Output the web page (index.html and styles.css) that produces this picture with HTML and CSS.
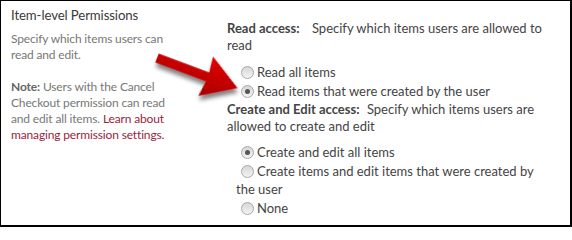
FILE: index.html
```html
<!DOCTYPE html>
<html>
<head>
<meta charset="utf-8">
<link rel="stylesheet" href="styles.css">
</head>
<body>
<div class="frame">
  <section class="left">
    <h3 class="title">Item-level Permissions</h3>
    <p class="desc">Specify which items users can read and edit.</p>
    <p class="desc"><b>Note:</b> Users with the Cancel Checkout permission can read and edit all items. <a class="link" href="#">Learn about managing permission settings.</a></p>
  </section>
  <section class="right">
    <p class="q"><b class="qlabel qlabel-read">Read access:</b> Specify which items users are allowed to read</p>
    <div class="opts opts-read">
      <div class="opt"><input class="radio" type="radio" name="read"><label class="lbl">Read all items</label></div>
      <div class="opt"><input class="radio" type="radio" name="read" checked><label class="lbl">Read items that were created by the user</label></div>
    </div>
    <p class="q q2"><b class="qlabel qlabel-edit">Create and Edit access:</b> Specify which items users are allowed to create and edit</p>
    <div class="opts opts-edit">
      <div class="opt"><input class="radio" type="radio" name="edit" checked><label class="lbl">Create and edit all items</label></div>
      <div class="opt"><input class="radio" type="radio" name="edit"><label class="lbl">Create items and edit items that were created by the user</label></div>
      <div class="opt"><input class="radio" type="radio" name="edit"><label class="lbl">None</label></div>
    </div>
  </section>
  <svg class="arrow" width="572" height="227" viewBox="0 0 572 227">
    <defs>
      <linearGradient id="red" x1="0" y1="0" x2="0" y2="1">
        <stop offset="0" stop-color="#e00000"/>
        <stop offset="1" stop-color="#a80000"/>
      </linearGradient>
      <filter id="sh" x="-20%" y="-20%" width="150%" height="160%">
        <feGaussianBlur in="SourceAlpha" stdDeviation="2.2"/>
        <feOffset dx="2" dy="4" result="b"/>
        <feComponentTransfer><feFuncA type="linear" slope="0.5"/></feComponentTransfer>
        <feMerge><feMergeNode/><feMergeNode in="SourceGraphic"/></feMerge>
      </filter>
    </defs>
    <g transform="translate(157 58) rotate(20.5)" filter="url(#sh)">
      <polygon points="0,-4.8 54,-4.8 52,-21 86,0 52,21 54,4.8 0,4.8" fill="url(#red)"/>
    </g>
  </svg>
</div>
</body>
</html>
```

FILE: styles.css
```css
* { box-sizing: border-box; }
html, body { margin: 0; padding: 0; background: #fff; }
.frame {
  position: relative;
  width: 572px;
  height: 227px;
  border-style: solid;
  border-color: #000;
  border-width: 1px 2px 2px 1px;
  display: grid;
  grid-template-columns: 226px 1fr;
  font-family: "Lato", "Open Sans", sans-serif;
  font-size: 13px;
  line-height: 16px;
  color: #444;
  overflow: hidden;
}
.left { padding: 4px 48px 0 10px; }
.title {
  margin: 0 0 6px;
  font-size: 13.2px;
  letter-spacing: -0.1px;
  font-weight: normal;
  line-height: 20px;
  color: #3a3a3a;
}
.desc {
  margin: 0 0 16px;
  font-size: 12px;
  letter-spacing: -0.15px;
  color: #777;
}
.desc b { color: #666; }
.link { color: #9b1d3c; text-decoration: none; }
.right { padding: 19px 18px 0 0; }
.q { margin: 0; line-height: 17px; }
.q2 { margin-top: 1px; }
.qlabel { color: #444; }
.qlabel-read { margin-right: 9px; }
.qlabel-edit { margin-right: 4px; }
.opts { padding-left: 9px; }
.opts-read { margin: 9px 0 0; }
.opts-edit { margin: 8px 0 0; }
.opt { line-height: 18px; margin-bottom: 1px; }
.radio {
  -webkit-appearance: none;
  appearance: none;
  width: 13px;
  height: 13px;
  margin: 0 3px 0 5px;
  vertical-align: -2px;
  border: 1px solid #a8a8a8;
  border-radius: 50%;
  background: linear-gradient(#d6d6d6, #f4f4f4);
  position: relative;
}
.radio:checked::after {
  content: "";
  position: absolute;
  left: 3px;
  top: 3px;
  width: 5px;
  height: 5px;
  border-radius: 50%;
  background: #555;
}
.lbl { color: #444; }
.arrow { position: absolute; left: -1px; top: -1px; pointer-events: none; }
```
